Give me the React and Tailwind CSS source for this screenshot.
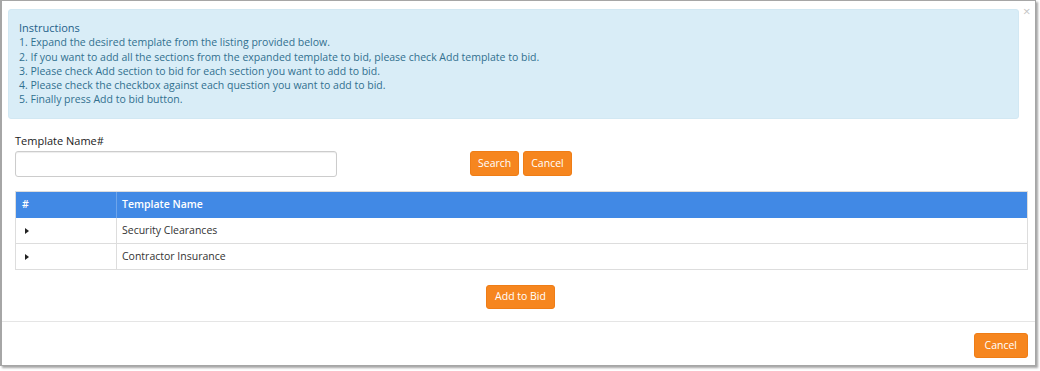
export default function App() {
  const font = { fontFamily: '"Open Sans", "Noto Sans", sans-serif' };
  return (
    <div className="w-[1040px] h-[371px] bg-white" style={font}>
      <div className="w-[1036px] h-[366px] border border-[#a6a6a6] border-l-2 shadow-[2px_2px_2px_rgba(0,0,0,0.35)] bg-white flex flex-col">
        <div className="flex pt-[8px] pl-[6px]">
          <div className="w-[1011px] h-[110px] bg-[#d9edf7] border border-[#d2e8f3] rounded-[3px] pl-[10px] pt-[11px] text-[#31708f] text-[10.5px] leading-[14.3px]">
            <div className="text-[11px] text-[#24618a]">Instructions</div>
            <div>1. Expand the desired template from the listing provided below.</div>
            <div>2. If you want to add all the sections from the expanded template to bid, please check Add template to bid.</div>
            <div>3. Please check Add section to bid for each section you want to add to bid.</div>
            <div>4. Please check the checkbox against each question you want to add to bid.</div>
            <div>5. Finally press Add to bid button.</div>
          </div>
          <div className="ml-[4px] -mt-[4px] text-[13px] leading-none text-[#c4c4c4]">×</div>
        </div>
        <div className="px-[13px]">
          <div className="mt-[14px] text-[11px] text-[#222] leading-[16px]">Template Name#</div>
          <div className="flex items-start mt-[2px]">
            <div className="w-[322px] h-[26px] border border-[#cccccc] rounded-[3px] shadow-[inset_0_1px_1px_rgba(0,0,0,0.075)]"></div>
            <div className="ml-[133px] flex gap-[4px]">
              <button className="h-[25px] px-[7px] bg-[#f6861f] border border-[#ef7d16] rounded-[3px] text-white text-[10.5px]">Search</button>
              <button className="h-[25px] px-[7px] bg-[#f6861f] border border-[#ef7d16] rounded-[3px] text-white text-[10.5px]">Cancel</button>
            </div>
          </div>
          <div className="mt-[14px] w-[1013px] border border-[#dddddd] text-[10.5px]">
            <div className="flex h-[26px] bg-[#4189e5] text-white font-semibold items-center">
              <div className="w-[101px] pl-[6px] border-r border-[#6ea5eb] h-full flex items-center">#</div>
              <div className="pl-[5px]">Template Name</div>
            </div>
            <div className="flex h-[26px] items-center text-[#333] border-b border-[#dddddd]">
              <div className="w-[101px] pl-[9px] border-r border-[#dddddd] h-full flex items-center">
                <svg width="4" height="6" viewBox="0 0 4 6"><path d="M0 0 L4 3 L0 6 Z" fill="#222" /></svg>
              </div>
              <div className="pl-[5px]">Security Clearances</div>
            </div>
            <div className="flex h-[25px] items-center text-[#333]">
              <div className="w-[101px] pl-[9px] border-r border-[#dddddd] h-full flex items-center">
                <svg width="4" height="6" viewBox="0 0 4 6"><path d="M0 0 L4 3 L0 6 Z" fill="#222" /></svg>
              </div>
              <div className="pl-[5px]">Contractor Insurance</div>
            </div>
          </div>
          <div className="flex justify-center mt-[15px] pl-[4px]">
            <button className="h-[24px] px-[8px] bg-[#f6861f] border border-[#ef7d16] rounded-[3px] text-white text-[10.5px]">Add to Bid</button>
          </div>
        </div>
        <div className="mt-[12px] border-t border-[#e5e5e5] flex justify-end pt-[11px] pr-[7px]">
          <button className="h-[25px] px-[10px] bg-[#f6861f] border border-[#ef7d16] rounded-[3px] text-white text-[10.5px]">Cancel</button>
        </div>
      </div>
    </div>
  );
}
